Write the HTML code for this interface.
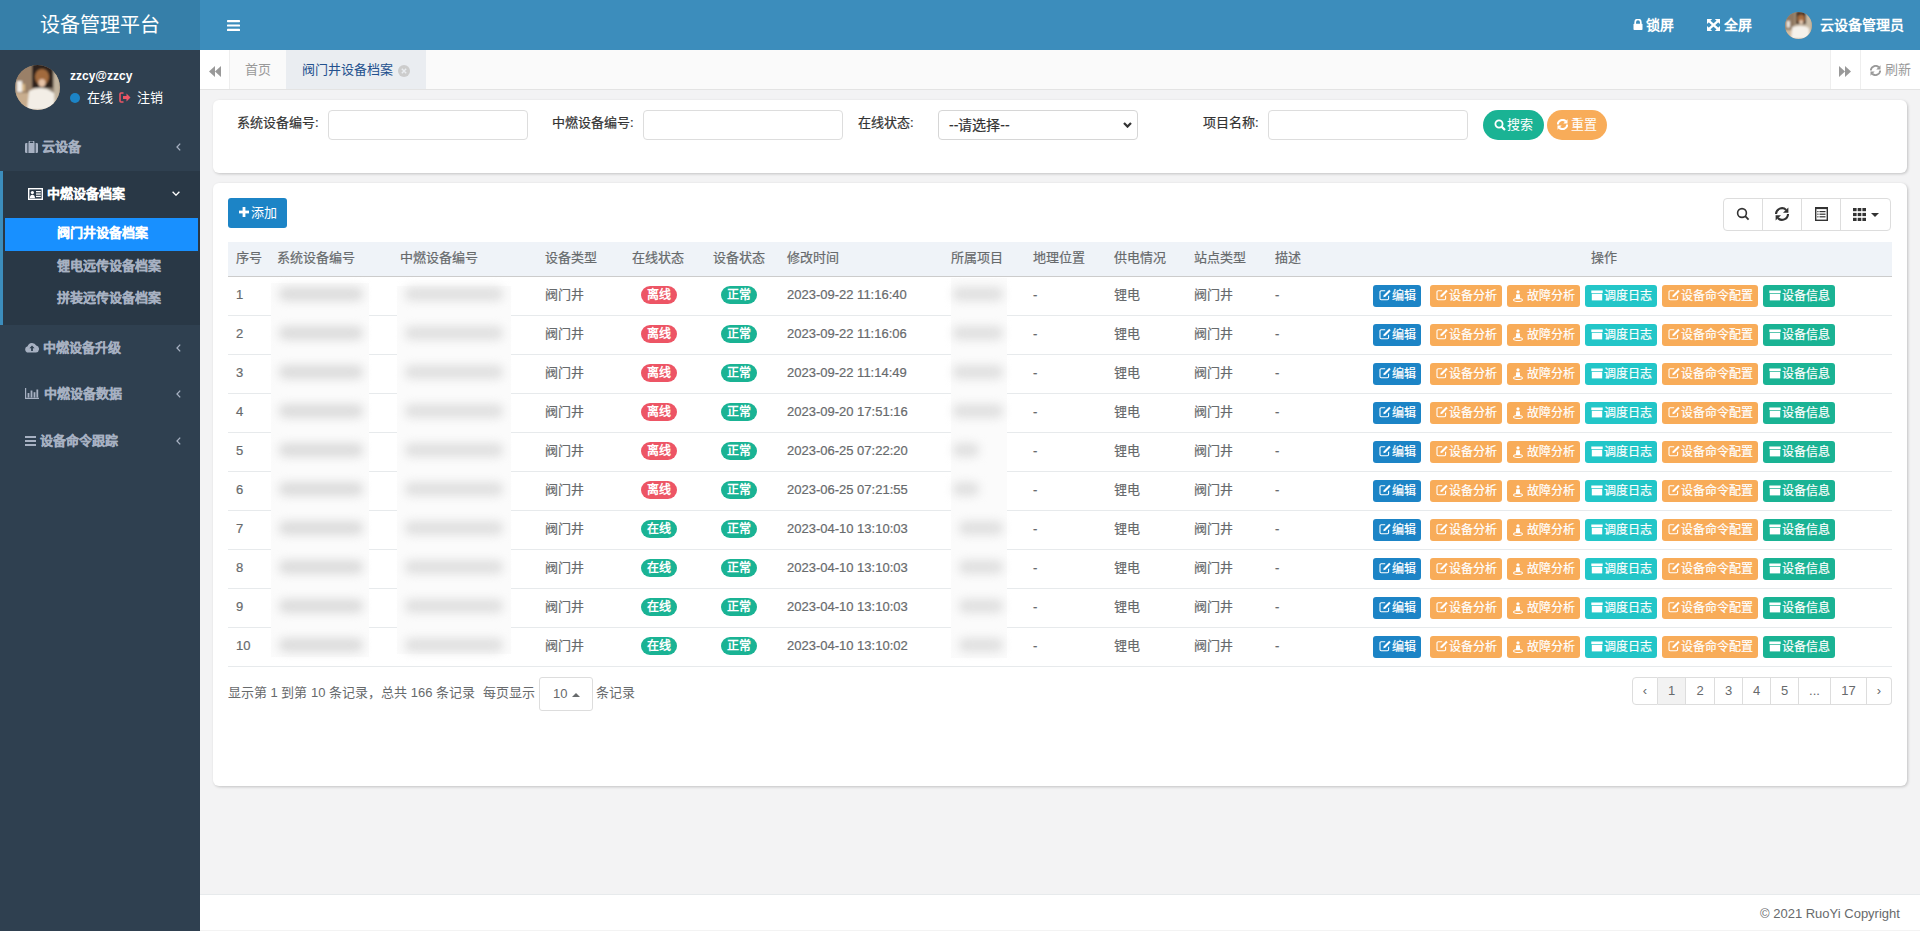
<!DOCTYPE html><html lang="zh-CN"><head><meta charset="utf-8"><title>RuoYi</title><style>*{margin:0;padding:0;box-sizing:border-box}
html,body{width:1920px;height:931px;overflow:hidden}
body{font-family:"Liberation Sans",sans-serif;font-size:13px;color:#676a6c;background:#f3f3f4;position:relative}
.abs{position:absolute}
svg{display:block}
/* header */
#logo{position:absolute;left:0;top:0;width:200px;height:50px;background:#367fa9;color:#fff;font-size:20px;line-height:50px;text-align:center}
#navbar{position:absolute;left:200px;top:0;width:1720px;height:50px;background:#3c8dbc}
.hdr-t{position:absolute;color:#fff;font-weight:bold;font-size:14px;line-height:16px;top:17px}
/* sidebar */
#side{position:absolute;left:0;top:50px;width:200px;height:881px;background:#2f4050}
.menu-t{position:absolute;color:#a7b1c2;font-weight:bold;font-size:13px;line-height:16px}
.sub-t{position:absolute;color:#a7b1c2;font-weight:bold;font-size:13px;line-height:16px;left:57px}
/* tabs */
#tabs{position:absolute;left:200px;top:50px;width:1720px;height:40px;background:#fafafa;border-bottom:1px solid #e3e3e3}
/* panels */
.panel{position:absolute;background:#fff;border-radius:6px;box-shadow:1px 1px 3px rgba(0,0,0,.2)}
.lbl{position:absolute;color:#333;font-size:13px;line-height:16px}
.inp{position:absolute;height:30px;border:1px solid #ddd;border-radius:4px;background:#fff}
.rbtn{position:absolute;height:30px;border-radius:16px;color:#fff;font-size:13px;line-height:30px}
/* table */
.row{position:absolute;left:0;width:1920px;height:39px}
.rowline{position:absolute;left:228px;width:1664px;height:1px;background:#e7eaec}
.row .c{position:absolute;top:-1px;line-height:37px;font-size:13px;color:#676a6c;white-space:nowrap}
.th{position:absolute;top:250px;line-height:16px;color:#676a6c;font-size:13px;white-space:nowrap}
.badge{position:absolute;top:9px;width:36px;height:18px;border-radius:9px;color:#fff;font-weight:bold;font-size:12px;line-height:18px;text-align:center}
.bd-red{background:#ed5565}
.bd-green{background:#1ab394}
.btn{position:absolute;top:8px;height:22px;border-radius:3px;color:#fff;font-size:12px;line-height:20px;white-space:nowrap;padding-left:6px;display:flex;align-items:center}
.btn .ic{margin-right:1px}
.b-blue{background:#1c84c6}
.b-orange{background:#f8ac59}
.b-cyan{background:#23c6c8}
.b-teal{background:#1ab394}
.blurblk{position:absolute;background:#fbfbfb;z-index:2}
.blurblk .bb{position:absolute;filter:blur(5px);border-radius:6px}
/* pagination */
.pg{position:absolute;top:677px;height:28px;border:1px solid #ddd;border-left:none;color:#676a6c;font-size:13px;line-height:26px;text-align:center;background:#fff}
#footer{position:absolute;left:200px;top:894px;width:1720px;height:37px;background:#fff;border-top:1px solid #e7eaec}
.row .c,.th,.lbl,.btn,.menu-t,.sub-t{-webkit-text-stroke:0.2px currentColor}
</style></head><body><div id="logo">设备管理平台</div>
<div id="navbar"></div>
<!-- hamburger -->
<svg class="abs" style="left:227px;top:20px" width="13" height="11" viewBox="0 0 13 11"><rect y="0" width="13" height="2.2" rx="0.6" fill="#fff"/><rect y="4.4" width="13" height="2.2" rx="0.6" fill="#fff"/><rect y="8.8" width="13" height="2.2" rx="0.6" fill="#fff"/></svg>
<!-- lock -->
<svg class="abs" style="left:1633px;top:19px" width="10" height="11" viewBox="0 0 10 11"><path d="M2.2 5V3.2a2.8 2.8 0 0 1 5.6 0V5" stroke="#fff" stroke-width="1.7" fill="none"/><rect x="0.5" y="4.8" width="9" height="6.2" rx="0.8" fill="#fff"/></svg>
<span class="hdr-t" style="left:1646px">锁屏</span>
<!-- fullscreen -->
<svg class="abs" style="left:1707px;top:19px" width="13" height="12" viewBox="0 0 13 12"><path d="M2.2 2.2L10.8 9.8M10.8 2.2L2.2 9.8" stroke="#fff" stroke-width="2.4"/><path d="M0 0h5.2L0 5z M13 0v5L7.8 0z M0 12V7l5.2 5z M13 12H7.8L13 7z" fill="#fff"/></svg>
<span class="hdr-t" style="left:1724px">全屏</span>
<!-- avatar small -->
<svg class="abs" style="left:1785px;top:12px" width="27" height="27" viewBox="0 0 45 45"><defs><clipPath id="avc2"><circle cx="22.5" cy="22.5" r="22.5"/></clipPath><filter id="avb2" x="-20%" y="-20%" width="140%" height="140%"><feGaussianBlur stdDeviation="1.6"/></filter></defs><g clip-path="url(#avc2)"><rect width="45" height="45" fill="#a89278"/><g filter="url(#avb2)"><rect x="0" y="0" width="16" height="45" fill="#8e7862"/><rect x="0" y="30" width="16" height="15" fill="#d2bca0"/><rect x="34" y="0" width="11" height="45" fill="#c8baa4"/><rect x="19" y="0" width="16" height="20" fill="#3a2c22"/><ellipse cx="27" cy="11" rx="6" ry="7" fill="#a86e40"/><ellipse cx="27" cy="17" rx="3.2" ry="3.6" fill="#ead0b8"/><path d="M10 45 L12 25 Q22 20 33 23 L40 27 L41 45z" fill="#f5f1ea"/><rect x="3" y="15" width="5" height="11" fill="#f4f0ea"/></g></g></svg>
<span class="hdr-t" style="left:1820px">云设备管理员</span>

<!-- sidebar -->
<div id="side"></div>
<svg class="abs" style="left:15px;top:65px" width="45" height="45" viewBox="0 0 45 45"><defs><clipPath id="avc"><circle cx="22.5" cy="22.5" r="22.5"/></clipPath><filter id="avb" x="-20%" y="-20%" width="140%" height="140%"><feGaussianBlur stdDeviation="1.1"/></filter></defs><g clip-path="url(#avc)"><rect width="45" height="45" fill="#a08a72"/><g filter="url(#avb)"><rect x="0" y="0" width="18" height="45" fill="#9a8068"/><rect x="0" y="28" width="20" height="17" fill="#c8ad8e"/><rect x="36" y="0" width="9" height="45" fill="#c2b49e"/><rect x="31" y="4" width="8" height="40" fill="#8e8070"/><rect x="17" y="-2" width="21" height="25" fill="#2e241c"/><ellipse cx="27" cy="12" rx="7" ry="8" fill="#a26a3c"/><ellipse cx="27" cy="18" rx="3.5" ry="4" fill="#e6c2a6"/><path d="M12 45 L14 26 Q22 21 32 24 L39 28 L40 45z" fill="#f3eee6"/><rect x="2" y="16" width="5" height="11" fill="#f4f0ea"/><rect x="7" y="19" width="3" height="7" fill="#d8b888"/></g></g></svg>
<span class="abs" style="left:70px;top:68px;color:#fff;font-weight:bold;font-size:12px;line-height:16px">zzcy@zzcy</span>
<div class="abs" style="left:70px;top:93px;width:10px;height:10px;border-radius:50%;background:#1c84c6"></div>
<span class="abs" style="left:87px;top:90px;color:#fff;font-size:13px;line-height:16px">在线</span>
<svg class="abs" style="left:119px;top:92px" width="12" height="11" viewBox="0 0 12 11"><path d="M4.5 1H2a1 1 0 0 0-1 1v7a1 1 0 0 0 1 1h2.5" stroke="#ed5565" stroke-width="1.6" fill="none"/><path d="M4 4h3.5V1.5L11.5 5.5 7.5 9.5V7H4z" fill="#ed5565"/></svg>
<span class="abs" style="left:137px;top:90px;color:#fff;font-size:13px;line-height:16px">注销</span>

<!-- menu 1 -->
<svg class="abs" style="left:25px;top:141px" width="13" height="12" viewBox="0 0 13 12"><path d="M4.2 2V1a1 1 0 0 1 1-1h2.6a1 1 0 0 1 1 1v1" stroke="#a7b1c2" stroke-width="1.2" fill="none"/><rect x="0" y="2" width="13" height="10" rx="1.2" fill="#a7b1c2"/><rect x="2.4" y="2" width="1" height="10" fill="#2f4050"/><rect x="9.6" y="2" width="1" height="10" fill="#2f4050"/></svg>
<span class="menu-t" style="left:42px;top:139px">云设备</span>
<svg class="abs" style="left:176px;top:143px" width="5" height="8" viewBox="0 0 5 8"><path d="M4.2 0.6L1 4l3.2 3.4" stroke="#a7b1c2" stroke-width="1.3" fill="none"/></svg>

<!-- active section -->
<div class="abs" style="left:0;top:171px;width:200px;height:154px;background:#293846;border-left:3px solid #3c8dbc"></div>
<svg class="abs" style="left:28px;top:188px" width="15" height="12" viewBox="0 0 15 12"><rect x="0.7" y="0.7" width="13.6" height="10.6" fill="none" stroke="#fff" stroke-width="1.4"/><circle cx="4.4" cy="4.6" r="1.6" fill="#fff"/><path d="M1.8 10.3c0-2.6 1.2-3.6 2.6-3.6s2.6 1 2.6 3.6z" fill="#fff"/><rect x="8" y="3" width="4.8" height="1.3" fill="#fff"/><rect x="8" y="5.4" width="4.8" height="1.3" fill="#fff"/><rect x="8" y="7.8" width="4.8" height="1.3" fill="#fff"/></svg>
<span class="menu-t" style="left:47px;top:186px;color:#fff">中燃设备档案</span>
<svg class="abs" style="left:172px;top:191px" width="8" height="5" viewBox="0 0 8 5"><path d="M0.6 0.8L4 4.2l3.4-3.4" stroke="#fff" stroke-width="1.3" fill="none"/></svg>
<div class="abs" style="left:5px;top:218px;width:193px;height:33px;background:#1890ff"></div>
<span class="sub-t" style="top:225px;color:#fff">阀门井设备档案</span>
<span class="sub-t" style="top:258px">锂电远传设备档案</span>
<span class="sub-t" style="top:290px">拼装远传设备档案</span>

<!-- menu others -->
<svg class="abs" style="left:25px;top:342px" width="14" height="11" viewBox="0 0 14 11"><path d="M3.3 10.5A3.2 3.2 0 0 1 2.6 4.2 4.6 4.6 0 0 1 11.2 3.6a3.5 3.5 0 0 1-.2 6.9z" fill="#a7b1c2"/><path d="M7 3.5L4.4 6.3h1.7v2.6h1.8V6.3h1.7z" fill="#2f4050"/></svg>
<span class="menu-t" style="left:43px;top:340px">中燃设备升级</span>
<svg class="abs" style="left:176px;top:344px" width="5" height="8" viewBox="0 0 5 8"><path d="M4.2 0.6L1 4l3.2 3.4" stroke="#a7b1c2" stroke-width="1.3" fill="none"/></svg>

<svg class="abs" style="left:25px;top:388px" width="14" height="11" viewBox="0 0 14 11"><path d="M0.6 0v10.4H14" stroke="#a7b1c2" stroke-width="1.2" fill="none"/><rect x="2.6" y="5" width="1.8" height="4.6" fill="#a7b1c2"/><rect x="5.6" y="2.5" width="1.8" height="7.1" fill="#a7b1c2"/><rect x="8.6" y="4.2" width="1.8" height="5.4" fill="#a7b1c2"/><rect x="11.4" y="1.5" width="1.8" height="8.1" fill="#a7b1c2"/></svg>
<span class="menu-t" style="left:44px;top:386px">中燃设备数据</span>
<svg class="abs" style="left:176px;top:390px" width="5" height="8" viewBox="0 0 5 8"><path d="M4.2 0.6L1 4l3.2 3.4" stroke="#a7b1c2" stroke-width="1.3" fill="none"/></svg>

<svg class="abs" style="left:25px;top:436px" width="11" height="10" viewBox="0 0 11 10"><rect y="0" width="11" height="2" fill="#a7b1c2"/><rect y="4" width="11" height="2" fill="#a7b1c2"/><rect y="8" width="11" height="2" fill="#a7b1c2"/></svg>
<span class="menu-t" style="left:40px;top:433px">设备命令跟踪</span>
<svg class="abs" style="left:176px;top:437px" width="5" height="8" viewBox="0 0 5 8"><path d="M4.2 0.6L1 4l3.2 3.4" stroke="#a7b1c2" stroke-width="1.3" fill="none"/></svg>

<!-- tabs -->
<div id="tabs"></div>
<div class="abs" style="left:200px;top:50px;width:29px;height:39px;background:#fff"></div>
<div class="abs" style="left:229px;top:50px;width:1px;height:39px;background:#eee"></div>
<svg class="abs" style="left:209px;top:66px" width="12" height="11" viewBox="0 0 12 11"><path d="M6 0v11L0 5.5z M12 0v11L6 5.5z" fill="#999"/></svg>
<span class="abs" style="left:245px;top:62px;color:#999;font-size:13px;line-height:16px">首页</span>
<div class="abs" style="left:286px;top:50px;width:140px;height:39px;background:#eaedf1"></div>
<span class="abs" style="left:302px;top:62px;color:#23508e;font-size:13px;line-height:16px">阀门井设备档案</span>
<svg class="abs" style="left:398px;top:65px" width="12" height="12" viewBox="0 0 12 12"><circle cx="6" cy="6" r="6" fill="#ccc"/><path d="M3.8 3.8l4.4 4.4M8.2 3.8L3.8 8.2" stroke="#eaedf1" stroke-width="1.4"/></svg>
<div class="abs" style="left:1830px;top:50px;width:90px;height:39px;background:#fff;border-left:1px solid #eee"></div>
<div class="abs" style="left:1860px;top:50px;width:1px;height:39px;background:#eee"></div>
<svg class="abs" style="left:1839px;top:66px" width="12" height="11" viewBox="0 0 12 11"><path d="M0 0v11l6-5.5z M6 0v11l6-5.5z" fill="#999"/></svg>
<svg class="abs" style="left:1870px;top:65px" width="11" height="11" viewBox="0 0 14 14"><path d="M1 7A6 6 0 0 1 11.2 2.9" stroke="#999" stroke-width="2.4" fill="none"/><path d="M13.4 0.4V5.8H8z" fill="#999"/><path d="M13 7A6 6 0 0 1 2.8 11.1" stroke="#999" stroke-width="2.4" fill="none"/><path d="M0.6 13.6V8.2H6z" fill="#999"/></svg>
<span class="abs" style="left:1885px;top:62px;color:#999;font-size:13px;line-height:16px">刷新</span>

<!-- search panel -->
<div class="panel" style="left:213px;top:100px;width:1694px;height:73px"></div>
<span class="lbl" style="left:237px;top:115px">系统设备编号:</span>
<div class="inp" style="left:328px;top:110px;width:200px"></div>
<span class="lbl" style="left:552px;top:115px">中燃设备编号:</span>
<div class="inp" style="left:643px;top:110px;width:200px"></div>
<span class="lbl" style="left:858px;top:115px">在线状态:</span>
<div class="inp" style="left:938px;top:110px;width:200px;border-color:#d6d6d6"></div>
<span class="lbl" style="left:949px;top:117px;font-size:14px">--请选择--</span>
<svg class="abs" style="left:1123px;top:122px" width="9" height="6" viewBox="0 0 9 6"><path d="M1 1L4.5 4.6 8 1" stroke="#333" stroke-width="2.2" fill="none"/></svg>
<span class="lbl" style="left:1203px;top:115px">项目名称:</span>
<div class="inp" style="left:1268px;top:110px;width:200px"></div>
<div class="rbtn" style="left:1483px;top:110px;width:61px;background:#1ab394"></div>
<svg class="abs" style="left:1494px;top:119px" width="12" height="12" viewBox="0 0 12 12"><circle cx="5" cy="5" r="3.6" stroke="#fff" stroke-width="1.8" fill="none"/><path d="M7.6 7.6l3.4 3.4" stroke="#fff" stroke-width="2.2"/></svg>
<span class="abs" style="left:1507px;top:117px;color:#fff;font-size:13px;line-height:16px">搜索</span>
<div class="rbtn" style="left:1547px;top:110px;width:60px;background:#f8ac59"></div>
<svg class="abs" style="left:1557px;top:119px" width="11" height="11" viewBox="0 0 14 14"><path d="M1 7A6 6 0 0 1 11.2 2.9" stroke="#fff" stroke-width="2.6" fill="none"/><path d="M13.4 0.4V5.8H8z" fill="#fff"/><path d="M13 7A6 6 0 0 1 2.8 11.1" stroke="#fff" stroke-width="2.6" fill="none"/><path d="M0.6 13.6V8.2H6z" fill="#fff"/></svg>
<span class="abs" style="left:1571px;top:117px;color:#fff;font-size:13px;line-height:16px">重置</span>

<!-- table panel -->
<div class="panel" style="left:213px;top:183px;width:1694px;height:603px"></div>
<div class="abs" style="left:228px;top:198px;width:59px;height:30px;background:#1c84c6;border-radius:3px"></div>
<svg class="abs" style="left:239px;top:207px" width="10" height="10" viewBox="0 0 10 10"><rect x="3.6" y="0" width="2.8" height="10" fill="#fff"/><rect x="0" y="3.6" width="10" height="2.8" fill="#fff"/></svg>
<span class="abs" style="left:251px;top:205px;color:#fff;font-size:13px;line-height:16px">添加</span>

<!-- toolbar -->
<div class="abs" style="left:1723px;top:198px;width:168px;height:33px;border:1px solid #ddd;border-radius:4px;background:#fff"></div>
<div class="abs" style="left:1762px;top:199px;width:1px;height:31px;background:#ddd"></div>
<div class="abs" style="left:1801px;top:199px;width:1px;height:31px;background:#ddd"></div>
<div class="abs" style="left:1840px;top:199px;width:1px;height:31px;background:#ddd"></div>
<svg class="abs" style="left:1736px;top:207px" width="14" height="14" viewBox="0 0 14 14"><circle cx="6" cy="6" r="4.4" stroke="#333" stroke-width="1.6" fill="none"/><path d="M9.2 9.2l3.4 3.4" stroke="#333" stroke-width="1.8"/></svg>
<svg class="abs" style="left:1775px;top:207px" width="14" height="14" viewBox="0 0 14 14"><path d="M1 7A6 6 0 0 1 11.2 2.9" stroke="#333" stroke-width="2.1" fill="none"/><path d="M13.4 0.4V5.8H8z" fill="#333"/><path d="M13 7A6 6 0 0 1 2.8 11.1" stroke="#333" stroke-width="2.1" fill="none"/><path d="M0.6 13.6V8.2H6z" fill="#333"/></svg>
<svg class="abs" style="left:1815px;top:207px" width="13" height="14" viewBox="0 0 13 14"><rect x="0.7" y="0.7" width="11.6" height="12.6" fill="none" stroke="#333" stroke-width="1.4"/><rect x="0.7" y="0.7" width="11.6" height="1.4" fill="#333"/><rect x="2.3" y="4" width="1.2" height="1.2" fill="#333"/><rect x="4.5" y="4" width="6" height="1.2" fill="#333"/><rect x="2.3" y="6.6" width="1.2" height="1.2" fill="#333"/><rect x="4.5" y="6.6" width="6" height="1.2" fill="#333"/><rect x="2.3" y="9.2" width="1.2" height="1.2" fill="#333"/><rect x="4.5" y="9.2" width="6" height="1.2" fill="#333"/></svg>
<svg class="abs" style="left:1853px;top:208px" width="13" height="13" viewBox="0 0 13 13"><rect x="0" y="0" width="3.6" height="3.2" fill="#333"/><rect x="4.7" y="0" width="3.6" height="3.2" fill="#333"/><rect x="9.4" y="0" width="3.6" height="3.2" fill="#333"/><rect x="0" y="4.9" width="3.6" height="3.2" fill="#333"/><rect x="4.7" y="4.9" width="3.6" height="3.2" fill="#333"/><rect x="9.4" y="4.9" width="3.6" height="3.2" fill="#333"/><rect x="0" y="9.8" width="3.6" height="3.2" fill="#333"/><rect x="4.7" y="9.8" width="3.6" height="3.2" fill="#333"/><rect x="9.4" y="9.8" width="3.6" height="3.2" fill="#333"/></svg>
<svg class="abs" style="left:1871px;top:213px" width="8" height="4" viewBox="0 0 8 4"><path d="M0 0h8L4 4z" fill="#333"/></svg>

<!-- table header -->
<div class="abs" style="left:228px;top:242px;width:1664px;height:35px;background:#eff3f8;border-bottom:1px solid #ccc"></div>
<span class="th" style="left:236px">序号</span>
<span class="th" style="left:277px">系统设备编号</span>
<span class="th" style="left:400px">中燃设备编号</span>
<span class="th" style="left:545px">设备类型</span>
<span class="th" style="left:632px">在线状态</span>
<span class="th" style="left:713px">设备状态</span>
<span class="th" style="left:787px">修改时间</span>
<span class="th" style="left:951px">所属项目</span>
<span class="th" style="left:1033px">地理位置</span>
<span class="th" style="left:1114px">供电情况</span>
<span class="th" style="left:1194px">站点类型</span>
<span class="th" style="left:1275px">描述</span>
<span class="th" style="left:1591px">操作</span>

<div class="rowline" style="top:315px"></div><div class="row" style="top:277px"><span class="c" style="left:236px">1</span><span class="c" style="left:545px">阀门井</span><span class="badge bd-red" style="left:641px">离线</span><span class="badge bd-green" style="left:721px">正常</span><span class="c" style="left:787px">2023-09-22 11:16:40</span><span class="c" style="left:1033px">-</span><span class="c" style="left:1114px">锂电</span><span class="c" style="left:1194px">阀门井</span><span class="c" style="left:1275px">-</span><span class="btn b-blue" style="left:1373px;width:48px"><svg class="ic" width="12" height="12" viewBox="0 0 12 12" style="margin-top:-2px"><path d="M6.2 1.8H2.2a1.2 1.2 0 0 0-1.2 1.2v6.6a1.2 1.2 0 0 0 1.2 1.2h6.2a1.2 1.2 0 0 0 1.2-1.2V6.8" stroke="#fff" stroke-width="1.1" fill="none"/><path d="M4.3 8.2l.5-2 5.4-5.4 1.5 1.5-5.4 5.4z" fill="#fff"/></svg>编辑</span><span class="btn b-orange" style="left:1430px;width:72px"><svg class="ic" width="12" height="12" viewBox="0 0 12 12" style="margin-top:-2px"><path d="M6.2 1.8H2.2a1.2 1.2 0 0 0-1.2 1.2v6.6a1.2 1.2 0 0 0 1.2 1.2h6.2a1.2 1.2 0 0 0 1.2-1.2V6.8" stroke="#fff" stroke-width="1.1" fill="none"/><path d="M4.3 8.2l.5-2 5.4-5.4 1.5 1.5-5.4 5.4z" fill="#fff"/></svg>设备分析</span><span class="btn b-orange" style="left:1507px;width:73px"><svg class="ic" width="10" height="12" viewBox="0 0 10 12" style="margin-top:-1px"><circle cx="5" cy="1.8" r="1.6" fill="#fff"/><path d="M3.2 4.2h3.6l.3 3.8-.9 1.2H3.8l-.9-1.2z" fill="#fff"/><ellipse cx="5" cy="10" rx="4.4" ry="1.5" fill="none" stroke="#fff" stroke-width="1.1"/></svg>&nbsp;故障分析</span><span class="btn b-cyan" style="left:1585px;width:72px"><svg class="ic" width="12" height="11" viewBox="0 0 12 11" style="margin-top:-1px"><rect x="0.3" y="0.5" width="11.4" height="2.6" fill="#fff"/><rect x="0.8" y="3.8" width="10.4" height="6.6" fill="#fff"/></svg>调度日志</span><span class="btn b-orange" style="left:1662px;width:96px"><svg class="ic" width="12" height="12" viewBox="0 0 12 12" style="margin-top:-2px"><path d="M6.2 1.8H2.2a1.2 1.2 0 0 0-1.2 1.2v6.6a1.2 1.2 0 0 0 1.2 1.2h6.2a1.2 1.2 0 0 0 1.2-1.2V6.8" stroke="#fff" stroke-width="1.1" fill="none"/><path d="M4.3 8.2l.5-2 5.4-5.4 1.5 1.5-5.4 5.4z" fill="#fff"/></svg>设备命令配置</span><span class="btn b-teal" style="left:1763px;width:72px"><svg class="ic" width="12" height="11" viewBox="0 0 12 11" style="margin-top:-1px"><rect x="0.3" y="0.5" width="11.4" height="2.6" fill="#fff"/><rect x="0.8" y="3.8" width="10.4" height="6.6" fill="#fff"/></svg>设备信息</span></div><div class="rowline" style="top:354px"></div><div class="row" style="top:316px"><span class="c" style="left:236px">2</span><span class="c" style="left:545px">阀门井</span><span class="badge bd-red" style="left:641px">离线</span><span class="badge bd-green" style="left:721px">正常</span><span class="c" style="left:787px">2023-09-22 11:16:06</span><span class="c" style="left:1033px">-</span><span class="c" style="left:1114px">锂电</span><span class="c" style="left:1194px">阀门井</span><span class="c" style="left:1275px">-</span><span class="btn b-blue" style="left:1373px;width:48px"><svg class="ic" width="12" height="12" viewBox="0 0 12 12" style="margin-top:-2px"><path d="M6.2 1.8H2.2a1.2 1.2 0 0 0-1.2 1.2v6.6a1.2 1.2 0 0 0 1.2 1.2h6.2a1.2 1.2 0 0 0 1.2-1.2V6.8" stroke="#fff" stroke-width="1.1" fill="none"/><path d="M4.3 8.2l.5-2 5.4-5.4 1.5 1.5-5.4 5.4z" fill="#fff"/></svg>编辑</span><span class="btn b-orange" style="left:1430px;width:72px"><svg class="ic" width="12" height="12" viewBox="0 0 12 12" style="margin-top:-2px"><path d="M6.2 1.8H2.2a1.2 1.2 0 0 0-1.2 1.2v6.6a1.2 1.2 0 0 0 1.2 1.2h6.2a1.2 1.2 0 0 0 1.2-1.2V6.8" stroke="#fff" stroke-width="1.1" fill="none"/><path d="M4.3 8.2l.5-2 5.4-5.4 1.5 1.5-5.4 5.4z" fill="#fff"/></svg>设备分析</span><span class="btn b-orange" style="left:1507px;width:73px"><svg class="ic" width="10" height="12" viewBox="0 0 10 12" style="margin-top:-1px"><circle cx="5" cy="1.8" r="1.6" fill="#fff"/><path d="M3.2 4.2h3.6l.3 3.8-.9 1.2H3.8l-.9-1.2z" fill="#fff"/><ellipse cx="5" cy="10" rx="4.4" ry="1.5" fill="none" stroke="#fff" stroke-width="1.1"/></svg>&nbsp;故障分析</span><span class="btn b-cyan" style="left:1585px;width:72px"><svg class="ic" width="12" height="11" viewBox="0 0 12 11" style="margin-top:-1px"><rect x="0.3" y="0.5" width="11.4" height="2.6" fill="#fff"/><rect x="0.8" y="3.8" width="10.4" height="6.6" fill="#fff"/></svg>调度日志</span><span class="btn b-orange" style="left:1662px;width:96px"><svg class="ic" width="12" height="12" viewBox="0 0 12 12" style="margin-top:-2px"><path d="M6.2 1.8H2.2a1.2 1.2 0 0 0-1.2 1.2v6.6a1.2 1.2 0 0 0 1.2 1.2h6.2a1.2 1.2 0 0 0 1.2-1.2V6.8" stroke="#fff" stroke-width="1.1" fill="none"/><path d="M4.3 8.2l.5-2 5.4-5.4 1.5 1.5-5.4 5.4z" fill="#fff"/></svg>设备命令配置</span><span class="btn b-teal" style="left:1763px;width:72px"><svg class="ic" width="12" height="11" viewBox="0 0 12 11" style="margin-top:-1px"><rect x="0.3" y="0.5" width="11.4" height="2.6" fill="#fff"/><rect x="0.8" y="3.8" width="10.4" height="6.6" fill="#fff"/></svg>设备信息</span></div><div class="rowline" style="top:393px"></div><div class="row" style="top:355px"><span class="c" style="left:236px">3</span><span class="c" style="left:545px">阀门井</span><span class="badge bd-red" style="left:641px">离线</span><span class="badge bd-green" style="left:721px">正常</span><span class="c" style="left:787px">2023-09-22 11:14:49</span><span class="c" style="left:1033px">-</span><span class="c" style="left:1114px">锂电</span><span class="c" style="left:1194px">阀门井</span><span class="c" style="left:1275px">-</span><span class="btn b-blue" style="left:1373px;width:48px"><svg class="ic" width="12" height="12" viewBox="0 0 12 12" style="margin-top:-2px"><path d="M6.2 1.8H2.2a1.2 1.2 0 0 0-1.2 1.2v6.6a1.2 1.2 0 0 0 1.2 1.2h6.2a1.2 1.2 0 0 0 1.2-1.2V6.8" stroke="#fff" stroke-width="1.1" fill="none"/><path d="M4.3 8.2l.5-2 5.4-5.4 1.5 1.5-5.4 5.4z" fill="#fff"/></svg>编辑</span><span class="btn b-orange" style="left:1430px;width:72px"><svg class="ic" width="12" height="12" viewBox="0 0 12 12" style="margin-top:-2px"><path d="M6.2 1.8H2.2a1.2 1.2 0 0 0-1.2 1.2v6.6a1.2 1.2 0 0 0 1.2 1.2h6.2a1.2 1.2 0 0 0 1.2-1.2V6.8" stroke="#fff" stroke-width="1.1" fill="none"/><path d="M4.3 8.2l.5-2 5.4-5.4 1.5 1.5-5.4 5.4z" fill="#fff"/></svg>设备分析</span><span class="btn b-orange" style="left:1507px;width:73px"><svg class="ic" width="10" height="12" viewBox="0 0 10 12" style="margin-top:-1px"><circle cx="5" cy="1.8" r="1.6" fill="#fff"/><path d="M3.2 4.2h3.6l.3 3.8-.9 1.2H3.8l-.9-1.2z" fill="#fff"/><ellipse cx="5" cy="10" rx="4.4" ry="1.5" fill="none" stroke="#fff" stroke-width="1.1"/></svg>&nbsp;故障分析</span><span class="btn b-cyan" style="left:1585px;width:72px"><svg class="ic" width="12" height="11" viewBox="0 0 12 11" style="margin-top:-1px"><rect x="0.3" y="0.5" width="11.4" height="2.6" fill="#fff"/><rect x="0.8" y="3.8" width="10.4" height="6.6" fill="#fff"/></svg>调度日志</span><span class="btn b-orange" style="left:1662px;width:96px"><svg class="ic" width="12" height="12" viewBox="0 0 12 12" style="margin-top:-2px"><path d="M6.2 1.8H2.2a1.2 1.2 0 0 0-1.2 1.2v6.6a1.2 1.2 0 0 0 1.2 1.2h6.2a1.2 1.2 0 0 0 1.2-1.2V6.8" stroke="#fff" stroke-width="1.1" fill="none"/><path d="M4.3 8.2l.5-2 5.4-5.4 1.5 1.5-5.4 5.4z" fill="#fff"/></svg>设备命令配置</span><span class="btn b-teal" style="left:1763px;width:72px"><svg class="ic" width="12" height="11" viewBox="0 0 12 11" style="margin-top:-1px"><rect x="0.3" y="0.5" width="11.4" height="2.6" fill="#fff"/><rect x="0.8" y="3.8" width="10.4" height="6.6" fill="#fff"/></svg>设备信息</span></div><div class="rowline" style="top:432px"></div><div class="row" style="top:394px"><span class="c" style="left:236px">4</span><span class="c" style="left:545px">阀门井</span><span class="badge bd-red" style="left:641px">离线</span><span class="badge bd-green" style="left:721px">正常</span><span class="c" style="left:787px">2023-09-20 17:51:16</span><span class="c" style="left:1033px">-</span><span class="c" style="left:1114px">锂电</span><span class="c" style="left:1194px">阀门井</span><span class="c" style="left:1275px">-</span><span class="btn b-blue" style="left:1373px;width:48px"><svg class="ic" width="12" height="12" viewBox="0 0 12 12" style="margin-top:-2px"><path d="M6.2 1.8H2.2a1.2 1.2 0 0 0-1.2 1.2v6.6a1.2 1.2 0 0 0 1.2 1.2h6.2a1.2 1.2 0 0 0 1.2-1.2V6.8" stroke="#fff" stroke-width="1.1" fill="none"/><path d="M4.3 8.2l.5-2 5.4-5.4 1.5 1.5-5.4 5.4z" fill="#fff"/></svg>编辑</span><span class="btn b-orange" style="left:1430px;width:72px"><svg class="ic" width="12" height="12" viewBox="0 0 12 12" style="margin-top:-2px"><path d="M6.2 1.8H2.2a1.2 1.2 0 0 0-1.2 1.2v6.6a1.2 1.2 0 0 0 1.2 1.2h6.2a1.2 1.2 0 0 0 1.2-1.2V6.8" stroke="#fff" stroke-width="1.1" fill="none"/><path d="M4.3 8.2l.5-2 5.4-5.4 1.5 1.5-5.4 5.4z" fill="#fff"/></svg>设备分析</span><span class="btn b-orange" style="left:1507px;width:73px"><svg class="ic" width="10" height="12" viewBox="0 0 10 12" style="margin-top:-1px"><circle cx="5" cy="1.8" r="1.6" fill="#fff"/><path d="M3.2 4.2h3.6l.3 3.8-.9 1.2H3.8l-.9-1.2z" fill="#fff"/><ellipse cx="5" cy="10" rx="4.4" ry="1.5" fill="none" stroke="#fff" stroke-width="1.1"/></svg>&nbsp;故障分析</span><span class="btn b-cyan" style="left:1585px;width:72px"><svg class="ic" width="12" height="11" viewBox="0 0 12 11" style="margin-top:-1px"><rect x="0.3" y="0.5" width="11.4" height="2.6" fill="#fff"/><rect x="0.8" y="3.8" width="10.4" height="6.6" fill="#fff"/></svg>调度日志</span><span class="btn b-orange" style="left:1662px;width:96px"><svg class="ic" width="12" height="12" viewBox="0 0 12 12" style="margin-top:-2px"><path d="M6.2 1.8H2.2a1.2 1.2 0 0 0-1.2 1.2v6.6a1.2 1.2 0 0 0 1.2 1.2h6.2a1.2 1.2 0 0 0 1.2-1.2V6.8" stroke="#fff" stroke-width="1.1" fill="none"/><path d="M4.3 8.2l.5-2 5.4-5.4 1.5 1.5-5.4 5.4z" fill="#fff"/></svg>设备命令配置</span><span class="btn b-teal" style="left:1763px;width:72px"><svg class="ic" width="12" height="11" viewBox="0 0 12 11" style="margin-top:-1px"><rect x="0.3" y="0.5" width="11.4" height="2.6" fill="#fff"/><rect x="0.8" y="3.8" width="10.4" height="6.6" fill="#fff"/></svg>设备信息</span></div><div class="rowline" style="top:471px"></div><div class="row" style="top:433px"><span class="c" style="left:236px">5</span><span class="c" style="left:545px">阀门井</span><span class="badge bd-red" style="left:641px">离线</span><span class="badge bd-green" style="left:721px">正常</span><span class="c" style="left:787px">2023-06-25 07:22:20</span><span class="c" style="left:1033px">-</span><span class="c" style="left:1114px">锂电</span><span class="c" style="left:1194px">阀门井</span><span class="c" style="left:1275px">-</span><span class="btn b-blue" style="left:1373px;width:48px"><svg class="ic" width="12" height="12" viewBox="0 0 12 12" style="margin-top:-2px"><path d="M6.2 1.8H2.2a1.2 1.2 0 0 0-1.2 1.2v6.6a1.2 1.2 0 0 0 1.2 1.2h6.2a1.2 1.2 0 0 0 1.2-1.2V6.8" stroke="#fff" stroke-width="1.1" fill="none"/><path d="M4.3 8.2l.5-2 5.4-5.4 1.5 1.5-5.4 5.4z" fill="#fff"/></svg>编辑</span><span class="btn b-orange" style="left:1430px;width:72px"><svg class="ic" width="12" height="12" viewBox="0 0 12 12" style="margin-top:-2px"><path d="M6.2 1.8H2.2a1.2 1.2 0 0 0-1.2 1.2v6.6a1.2 1.2 0 0 0 1.2 1.2h6.2a1.2 1.2 0 0 0 1.2-1.2V6.8" stroke="#fff" stroke-width="1.1" fill="none"/><path d="M4.3 8.2l.5-2 5.4-5.4 1.5 1.5-5.4 5.4z" fill="#fff"/></svg>设备分析</span><span class="btn b-orange" style="left:1507px;width:73px"><svg class="ic" width="10" height="12" viewBox="0 0 10 12" style="margin-top:-1px"><circle cx="5" cy="1.8" r="1.6" fill="#fff"/><path d="M3.2 4.2h3.6l.3 3.8-.9 1.2H3.8l-.9-1.2z" fill="#fff"/><ellipse cx="5" cy="10" rx="4.4" ry="1.5" fill="none" stroke="#fff" stroke-width="1.1"/></svg>&nbsp;故障分析</span><span class="btn b-cyan" style="left:1585px;width:72px"><svg class="ic" width="12" height="11" viewBox="0 0 12 11" style="margin-top:-1px"><rect x="0.3" y="0.5" width="11.4" height="2.6" fill="#fff"/><rect x="0.8" y="3.8" width="10.4" height="6.6" fill="#fff"/></svg>调度日志</span><span class="btn b-orange" style="left:1662px;width:96px"><svg class="ic" width="12" height="12" viewBox="0 0 12 12" style="margin-top:-2px"><path d="M6.2 1.8H2.2a1.2 1.2 0 0 0-1.2 1.2v6.6a1.2 1.2 0 0 0 1.2 1.2h6.2a1.2 1.2 0 0 0 1.2-1.2V6.8" stroke="#fff" stroke-width="1.1" fill="none"/><path d="M4.3 8.2l.5-2 5.4-5.4 1.5 1.5-5.4 5.4z" fill="#fff"/></svg>设备命令配置</span><span class="btn b-teal" style="left:1763px;width:72px"><svg class="ic" width="12" height="11" viewBox="0 0 12 11" style="margin-top:-1px"><rect x="0.3" y="0.5" width="11.4" height="2.6" fill="#fff"/><rect x="0.8" y="3.8" width="10.4" height="6.6" fill="#fff"/></svg>设备信息</span></div><div class="rowline" style="top:510px"></div><div class="row" style="top:472px"><span class="c" style="left:236px">6</span><span class="c" style="left:545px">阀门井</span><span class="badge bd-red" style="left:641px">离线</span><span class="badge bd-green" style="left:721px">正常</span><span class="c" style="left:787px">2023-06-25 07:21:55</span><span class="c" style="left:1033px">-</span><span class="c" style="left:1114px">锂电</span><span class="c" style="left:1194px">阀门井</span><span class="c" style="left:1275px">-</span><span class="btn b-blue" style="left:1373px;width:48px"><svg class="ic" width="12" height="12" viewBox="0 0 12 12" style="margin-top:-2px"><path d="M6.2 1.8H2.2a1.2 1.2 0 0 0-1.2 1.2v6.6a1.2 1.2 0 0 0 1.2 1.2h6.2a1.2 1.2 0 0 0 1.2-1.2V6.8" stroke="#fff" stroke-width="1.1" fill="none"/><path d="M4.3 8.2l.5-2 5.4-5.4 1.5 1.5-5.4 5.4z" fill="#fff"/></svg>编辑</span><span class="btn b-orange" style="left:1430px;width:72px"><svg class="ic" width="12" height="12" viewBox="0 0 12 12" style="margin-top:-2px"><path d="M6.2 1.8H2.2a1.2 1.2 0 0 0-1.2 1.2v6.6a1.2 1.2 0 0 0 1.2 1.2h6.2a1.2 1.2 0 0 0 1.2-1.2V6.8" stroke="#fff" stroke-width="1.1" fill="none"/><path d="M4.3 8.2l.5-2 5.4-5.4 1.5 1.5-5.4 5.4z" fill="#fff"/></svg>设备分析</span><span class="btn b-orange" style="left:1507px;width:73px"><svg class="ic" width="10" height="12" viewBox="0 0 10 12" style="margin-top:-1px"><circle cx="5" cy="1.8" r="1.6" fill="#fff"/><path d="M3.2 4.2h3.6l.3 3.8-.9 1.2H3.8l-.9-1.2z" fill="#fff"/><ellipse cx="5" cy="10" rx="4.4" ry="1.5" fill="none" stroke="#fff" stroke-width="1.1"/></svg>&nbsp;故障分析</span><span class="btn b-cyan" style="left:1585px;width:72px"><svg class="ic" width="12" height="11" viewBox="0 0 12 11" style="margin-top:-1px"><rect x="0.3" y="0.5" width="11.4" height="2.6" fill="#fff"/><rect x="0.8" y="3.8" width="10.4" height="6.6" fill="#fff"/></svg>调度日志</span><span class="btn b-orange" style="left:1662px;width:96px"><svg class="ic" width="12" height="12" viewBox="0 0 12 12" style="margin-top:-2px"><path d="M6.2 1.8H2.2a1.2 1.2 0 0 0-1.2 1.2v6.6a1.2 1.2 0 0 0 1.2 1.2h6.2a1.2 1.2 0 0 0 1.2-1.2V6.8" stroke="#fff" stroke-width="1.1" fill="none"/><path d="M4.3 8.2l.5-2 5.4-5.4 1.5 1.5-5.4 5.4z" fill="#fff"/></svg>设备命令配置</span><span class="btn b-teal" style="left:1763px;width:72px"><svg class="ic" width="12" height="11" viewBox="0 0 12 11" style="margin-top:-1px"><rect x="0.3" y="0.5" width="11.4" height="2.6" fill="#fff"/><rect x="0.8" y="3.8" width="10.4" height="6.6" fill="#fff"/></svg>设备信息</span></div><div class="rowline" style="top:549px"></div><div class="row" style="top:511px"><span class="c" style="left:236px">7</span><span class="c" style="left:545px">阀门井</span><span class="badge bd-green" style="left:641px">在线</span><span class="badge bd-green" style="left:721px">正常</span><span class="c" style="left:787px">2023-04-10 13:10:03</span><span class="c" style="left:1033px">-</span><span class="c" style="left:1114px">锂电</span><span class="c" style="left:1194px">阀门井</span><span class="c" style="left:1275px">-</span><span class="btn b-blue" style="left:1373px;width:48px"><svg class="ic" width="12" height="12" viewBox="0 0 12 12" style="margin-top:-2px"><path d="M6.2 1.8H2.2a1.2 1.2 0 0 0-1.2 1.2v6.6a1.2 1.2 0 0 0 1.2 1.2h6.2a1.2 1.2 0 0 0 1.2-1.2V6.8" stroke="#fff" stroke-width="1.1" fill="none"/><path d="M4.3 8.2l.5-2 5.4-5.4 1.5 1.5-5.4 5.4z" fill="#fff"/></svg>编辑</span><span class="btn b-orange" style="left:1430px;width:72px"><svg class="ic" width="12" height="12" viewBox="0 0 12 12" style="margin-top:-2px"><path d="M6.2 1.8H2.2a1.2 1.2 0 0 0-1.2 1.2v6.6a1.2 1.2 0 0 0 1.2 1.2h6.2a1.2 1.2 0 0 0 1.2-1.2V6.8" stroke="#fff" stroke-width="1.1" fill="none"/><path d="M4.3 8.2l.5-2 5.4-5.4 1.5 1.5-5.4 5.4z" fill="#fff"/></svg>设备分析</span><span class="btn b-orange" style="left:1507px;width:73px"><svg class="ic" width="10" height="12" viewBox="0 0 10 12" style="margin-top:-1px"><circle cx="5" cy="1.8" r="1.6" fill="#fff"/><path d="M3.2 4.2h3.6l.3 3.8-.9 1.2H3.8l-.9-1.2z" fill="#fff"/><ellipse cx="5" cy="10" rx="4.4" ry="1.5" fill="none" stroke="#fff" stroke-width="1.1"/></svg>&nbsp;故障分析</span><span class="btn b-cyan" style="left:1585px;width:72px"><svg class="ic" width="12" height="11" viewBox="0 0 12 11" style="margin-top:-1px"><rect x="0.3" y="0.5" width="11.4" height="2.6" fill="#fff"/><rect x="0.8" y="3.8" width="10.4" height="6.6" fill="#fff"/></svg>调度日志</span><span class="btn b-orange" style="left:1662px;width:96px"><svg class="ic" width="12" height="12" viewBox="0 0 12 12" style="margin-top:-2px"><path d="M6.2 1.8H2.2a1.2 1.2 0 0 0-1.2 1.2v6.6a1.2 1.2 0 0 0 1.2 1.2h6.2a1.2 1.2 0 0 0 1.2-1.2V6.8" stroke="#fff" stroke-width="1.1" fill="none"/><path d="M4.3 8.2l.5-2 5.4-5.4 1.5 1.5-5.4 5.4z" fill="#fff"/></svg>设备命令配置</span><span class="btn b-teal" style="left:1763px;width:72px"><svg class="ic" width="12" height="11" viewBox="0 0 12 11" style="margin-top:-1px"><rect x="0.3" y="0.5" width="11.4" height="2.6" fill="#fff"/><rect x="0.8" y="3.8" width="10.4" height="6.6" fill="#fff"/></svg>设备信息</span></div><div class="rowline" style="top:588px"></div><div class="row" style="top:550px"><span class="c" style="left:236px">8</span><span class="c" style="left:545px">阀门井</span><span class="badge bd-green" style="left:641px">在线</span><span class="badge bd-green" style="left:721px">正常</span><span class="c" style="left:787px">2023-04-10 13:10:03</span><span class="c" style="left:1033px">-</span><span class="c" style="left:1114px">锂电</span><span class="c" style="left:1194px">阀门井</span><span class="c" style="left:1275px">-</span><span class="btn b-blue" style="left:1373px;width:48px"><svg class="ic" width="12" height="12" viewBox="0 0 12 12" style="margin-top:-2px"><path d="M6.2 1.8H2.2a1.2 1.2 0 0 0-1.2 1.2v6.6a1.2 1.2 0 0 0 1.2 1.2h6.2a1.2 1.2 0 0 0 1.2-1.2V6.8" stroke="#fff" stroke-width="1.1" fill="none"/><path d="M4.3 8.2l.5-2 5.4-5.4 1.5 1.5-5.4 5.4z" fill="#fff"/></svg>编辑</span><span class="btn b-orange" style="left:1430px;width:72px"><svg class="ic" width="12" height="12" viewBox="0 0 12 12" style="margin-top:-2px"><path d="M6.2 1.8H2.2a1.2 1.2 0 0 0-1.2 1.2v6.6a1.2 1.2 0 0 0 1.2 1.2h6.2a1.2 1.2 0 0 0 1.2-1.2V6.8" stroke="#fff" stroke-width="1.1" fill="none"/><path d="M4.3 8.2l.5-2 5.4-5.4 1.5 1.5-5.4 5.4z" fill="#fff"/></svg>设备分析</span><span class="btn b-orange" style="left:1507px;width:73px"><svg class="ic" width="10" height="12" viewBox="0 0 10 12" style="margin-top:-1px"><circle cx="5" cy="1.8" r="1.6" fill="#fff"/><path d="M3.2 4.2h3.6l.3 3.8-.9 1.2H3.8l-.9-1.2z" fill="#fff"/><ellipse cx="5" cy="10" rx="4.4" ry="1.5" fill="none" stroke="#fff" stroke-width="1.1"/></svg>&nbsp;故障分析</span><span class="btn b-cyan" style="left:1585px;width:72px"><svg class="ic" width="12" height="11" viewBox="0 0 12 11" style="margin-top:-1px"><rect x="0.3" y="0.5" width="11.4" height="2.6" fill="#fff"/><rect x="0.8" y="3.8" width="10.4" height="6.6" fill="#fff"/></svg>调度日志</span><span class="btn b-orange" style="left:1662px;width:96px"><svg class="ic" width="12" height="12" viewBox="0 0 12 12" style="margin-top:-2px"><path d="M6.2 1.8H2.2a1.2 1.2 0 0 0-1.2 1.2v6.6a1.2 1.2 0 0 0 1.2 1.2h6.2a1.2 1.2 0 0 0 1.2-1.2V6.8" stroke="#fff" stroke-width="1.1" fill="none"/><path d="M4.3 8.2l.5-2 5.4-5.4 1.5 1.5-5.4 5.4z" fill="#fff"/></svg>设备命令配置</span><span class="btn b-teal" style="left:1763px;width:72px"><svg class="ic" width="12" height="11" viewBox="0 0 12 11" style="margin-top:-1px"><rect x="0.3" y="0.5" width="11.4" height="2.6" fill="#fff"/><rect x="0.8" y="3.8" width="10.4" height="6.6" fill="#fff"/></svg>设备信息</span></div><div class="rowline" style="top:627px"></div><div class="row" style="top:589px"><span class="c" style="left:236px">9</span><span class="c" style="left:545px">阀门井</span><span class="badge bd-green" style="left:641px">在线</span><span class="badge bd-green" style="left:721px">正常</span><span class="c" style="left:787px">2023-04-10 13:10:03</span><span class="c" style="left:1033px">-</span><span class="c" style="left:1114px">锂电</span><span class="c" style="left:1194px">阀门井</span><span class="c" style="left:1275px">-</span><span class="btn b-blue" style="left:1373px;width:48px"><svg class="ic" width="12" height="12" viewBox="0 0 12 12" style="margin-top:-2px"><path d="M6.2 1.8H2.2a1.2 1.2 0 0 0-1.2 1.2v6.6a1.2 1.2 0 0 0 1.2 1.2h6.2a1.2 1.2 0 0 0 1.2-1.2V6.8" stroke="#fff" stroke-width="1.1" fill="none"/><path d="M4.3 8.2l.5-2 5.4-5.4 1.5 1.5-5.4 5.4z" fill="#fff"/></svg>编辑</span><span class="btn b-orange" style="left:1430px;width:72px"><svg class="ic" width="12" height="12" viewBox="0 0 12 12" style="margin-top:-2px"><path d="M6.2 1.8H2.2a1.2 1.2 0 0 0-1.2 1.2v6.6a1.2 1.2 0 0 0 1.2 1.2h6.2a1.2 1.2 0 0 0 1.2-1.2V6.8" stroke="#fff" stroke-width="1.1" fill="none"/><path d="M4.3 8.2l.5-2 5.4-5.4 1.5 1.5-5.4 5.4z" fill="#fff"/></svg>设备分析</span><span class="btn b-orange" style="left:1507px;width:73px"><svg class="ic" width="10" height="12" viewBox="0 0 10 12" style="margin-top:-1px"><circle cx="5" cy="1.8" r="1.6" fill="#fff"/><path d="M3.2 4.2h3.6l.3 3.8-.9 1.2H3.8l-.9-1.2z" fill="#fff"/><ellipse cx="5" cy="10" rx="4.4" ry="1.5" fill="none" stroke="#fff" stroke-width="1.1"/></svg>&nbsp;故障分析</span><span class="btn b-cyan" style="left:1585px;width:72px"><svg class="ic" width="12" height="11" viewBox="0 0 12 11" style="margin-top:-1px"><rect x="0.3" y="0.5" width="11.4" height="2.6" fill="#fff"/><rect x="0.8" y="3.8" width="10.4" height="6.6" fill="#fff"/></svg>调度日志</span><span class="btn b-orange" style="left:1662px;width:96px"><svg class="ic" width="12" height="12" viewBox="0 0 12 12" style="margin-top:-2px"><path d="M6.2 1.8H2.2a1.2 1.2 0 0 0-1.2 1.2v6.6a1.2 1.2 0 0 0 1.2 1.2h6.2a1.2 1.2 0 0 0 1.2-1.2V6.8" stroke="#fff" stroke-width="1.1" fill="none"/><path d="M4.3 8.2l.5-2 5.4-5.4 1.5 1.5-5.4 5.4z" fill="#fff"/></svg>设备命令配置</span><span class="btn b-teal" style="left:1763px;width:72px"><svg class="ic" width="12" height="11" viewBox="0 0 12 11" style="margin-top:-1px"><rect x="0.3" y="0.5" width="11.4" height="2.6" fill="#fff"/><rect x="0.8" y="3.8" width="10.4" height="6.6" fill="#fff"/></svg>设备信息</span></div><div class="rowline" style="top:666px"></div><div class="row" style="top:628px"><span class="c" style="left:236px">10</span><span class="c" style="left:545px">阀门井</span><span class="badge bd-green" style="left:641px">在线</span><span class="badge bd-green" style="left:721px">正常</span><span class="c" style="left:787px">2023-04-10 13:10:02</span><span class="c" style="left:1033px">-</span><span class="c" style="left:1114px">锂电</span><span class="c" style="left:1194px">阀门井</span><span class="c" style="left:1275px">-</span><span class="btn b-blue" style="left:1373px;width:48px"><svg class="ic" width="12" height="12" viewBox="0 0 12 12" style="margin-top:-2px"><path d="M6.2 1.8H2.2a1.2 1.2 0 0 0-1.2 1.2v6.6a1.2 1.2 0 0 0 1.2 1.2h6.2a1.2 1.2 0 0 0 1.2-1.2V6.8" stroke="#fff" stroke-width="1.1" fill="none"/><path d="M4.3 8.2l.5-2 5.4-5.4 1.5 1.5-5.4 5.4z" fill="#fff"/></svg>编辑</span><span class="btn b-orange" style="left:1430px;width:72px"><svg class="ic" width="12" height="12" viewBox="0 0 12 12" style="margin-top:-2px"><path d="M6.2 1.8H2.2a1.2 1.2 0 0 0-1.2 1.2v6.6a1.2 1.2 0 0 0 1.2 1.2h6.2a1.2 1.2 0 0 0 1.2-1.2V6.8" stroke="#fff" stroke-width="1.1" fill="none"/><path d="M4.3 8.2l.5-2 5.4-5.4 1.5 1.5-5.4 5.4z" fill="#fff"/></svg>设备分析</span><span class="btn b-orange" style="left:1507px;width:73px"><svg class="ic" width="10" height="12" viewBox="0 0 10 12" style="margin-top:-1px"><circle cx="5" cy="1.8" r="1.6" fill="#fff"/><path d="M3.2 4.2h3.6l.3 3.8-.9 1.2H3.8l-.9-1.2z" fill="#fff"/><ellipse cx="5" cy="10" rx="4.4" ry="1.5" fill="none" stroke="#fff" stroke-width="1.1"/></svg>&nbsp;故障分析</span><span class="btn b-cyan" style="left:1585px;width:72px"><svg class="ic" width="12" height="11" viewBox="0 0 12 11" style="margin-top:-1px"><rect x="0.3" y="0.5" width="11.4" height="2.6" fill="#fff"/><rect x="0.8" y="3.8" width="10.4" height="6.6" fill="#fff"/></svg>调度日志</span><span class="btn b-orange" style="left:1662px;width:96px"><svg class="ic" width="12" height="12" viewBox="0 0 12 12" style="margin-top:-2px"><path d="M6.2 1.8H2.2a1.2 1.2 0 0 0-1.2 1.2v6.6a1.2 1.2 0 0 0 1.2 1.2h6.2a1.2 1.2 0 0 0 1.2-1.2V6.8" stroke="#fff" stroke-width="1.1" fill="none"/><path d="M4.3 8.2l.5-2 5.4-5.4 1.5 1.5-5.4 5.4z" fill="#fff"/></svg>设备命令配置</span><span class="btn b-teal" style="left:1763px;width:72px"><svg class="ic" width="12" height="11" viewBox="0 0 12 11" style="margin-top:-1px"><rect x="0.3" y="0.5" width="11.4" height="2.6" fill="#fff"/><rect x="0.8" y="3.8" width="10.4" height="6.6" fill="#fff"/></svg>设备信息</span></div>
<div class="blurblk" style="left:271px;top:283px;width:98px;height:374px"><div class="bb" style="left:8px;top:4px;width:84px;height:14px;background:#dcdcdc"></div><div class="bb" style="left:8px;top:43px;width:84px;height:14px;background:#dcdcdc"></div><div class="bb" style="left:8px;top:82px;width:84px;height:14px;background:#dcdcdc"></div><div class="bb" style="left:8px;top:121px;width:84px;height:14px;background:#dcdcdc"></div><div class="bb" style="left:8px;top:160px;width:84px;height:14px;background:#dcdcdc"></div><div class="bb" style="left:8px;top:199px;width:84px;height:14px;background:#dcdcdc"></div><div class="bb" style="left:8px;top:238px;width:84px;height:14px;background:#dcdcdc"></div><div class="bb" style="left:8px;top:277px;width:84px;height:14px;background:#dcdcdc"></div><div class="bb" style="left:8px;top:316px;width:84px;height:14px;background:#dcdcdc"></div><div class="bb" style="left:8px;top:355px;width:84px;height:14px;background:#dcdcdc"></div></div><div class="blurblk" style="left:397px;top:286px;width:114px;height:368px"><div class="bb" style="left:8px;top:1px;width:98px;height:14px;background:#e0e0e0"></div><div class="bb" style="left:8px;top:40px;width:98px;height:14px;background:#e0e0e0"></div><div class="bb" style="left:8px;top:79px;width:98px;height:14px;background:#e0e0e0"></div><div class="bb" style="left:8px;top:118px;width:98px;height:14px;background:#e0e0e0"></div><div class="bb" style="left:8px;top:157px;width:98px;height:14px;background:#e0e0e0"></div><div class="bb" style="left:8px;top:196px;width:98px;height:14px;background:#e0e0e0"></div><div class="bb" style="left:8px;top:235px;width:98px;height:14px;background:#e0e0e0"></div><div class="bb" style="left:8px;top:274px;width:98px;height:14px;background:#e0e0e0"></div><div class="bb" style="left:8px;top:313px;width:98px;height:14px;background:#e0e0e0"></div><div class="bb" style="left:8px;top:352px;width:98px;height:14px;background:#e0e0e0"></div></div><div class="blurblk" style="left:951px;top:278px;width:56px;height:380px"><div class="bb" style="left:2px;top:9px;width:50px;height:14px;background:#e0e0e0"></div><div class="bb" style="left:2px;top:48px;width:50px;height:14px;background:#e0e0e0"></div><div class="bb" style="left:2px;top:87px;width:50px;height:14px;background:#e0e0e0"></div><div class="bb" style="left:2px;top:126px;width:50px;height:14px;background:#e0e0e0"></div><div class="bb" style="left:2px;top:165px;width:26px;height:14px;background:#e0e0e0"></div><div class="bb" style="left:2px;top:204px;width:26px;height:14px;background:#e0e0e0"></div><div class="bb" style="left:8px;top:243px;width:44px;height:14px;background:#e0e0e0"></div><div class="bb" style="left:8px;top:282px;width:44px;height:14px;background:#e0e0e0"></div><div class="bb" style="left:8px;top:321px;width:44px;height:14px;background:#e0e0e0"></div><div class="bb" style="left:8px;top:360px;width:44px;height:14px;background:#e0e0e0"></div></div>

<!-- footer of table -->
<span class="abs" style="left:228px;top:685px;color:#676a6c;font-size:13px;line-height:16px;white-space:nowrap">显示第 1 到第 10 条记录，总共 166 条记录</span>
<span class="abs" style="left:483px;top:685px;color:#676a6c;font-size:13px;line-height:16px">每页显示</span>
<div class="abs" style="left:539px;top:677px;width:54px;height:34px;border:1px solid #ddd;border-radius:3px;background:#fff"></div>
<span class="abs" style="left:553px;top:686px;color:#676a6c;font-size:13px;line-height:16px">10</span>
<svg class="abs" style="left:572px;top:693px" width="8" height="4" viewBox="0 0 8 4"><path d="M0 4h8L4 0z" fill="#676a6c"/></svg>
<span class="abs" style="left:596px;top:685px;color:#676a6c;font-size:13px;line-height:16px">条记录</span>

<div class="pg" style="left:1632px;width:26px;border-left:1px solid #ddd;border-radius:4px 0 0 4px">‹</div>
<div class="pg" style="left:1658px;width:28px;background:#f2f2f2">1</div>
<div class="pg" style="left:1686px;width:29px">2</div>
<div class="pg" style="left:1715px;width:28px">3</div>
<div class="pg" style="left:1743px;width:28px">4</div>
<div class="pg" style="left:1771px;width:28px">5</div>
<div class="pg" style="left:1799px;width:32px">...</div>
<div class="pg" style="left:1831px;width:36px">17</div>
<div class="pg" style="left:1867px;width:25px;border-radius:0 4px 4px 0">›</div>

<div id="footer"></div>
<div id="btmline" class="abs" style="left:200px;top:930px;width:1720px;height:1px;background:#f3f3f3"></div>
<span class="abs" style="left:1760px;top:906px;color:#676a6c;font-size:13px;line-height:16px">© 2021 RuoYi Copyright</span>
</body></html>
